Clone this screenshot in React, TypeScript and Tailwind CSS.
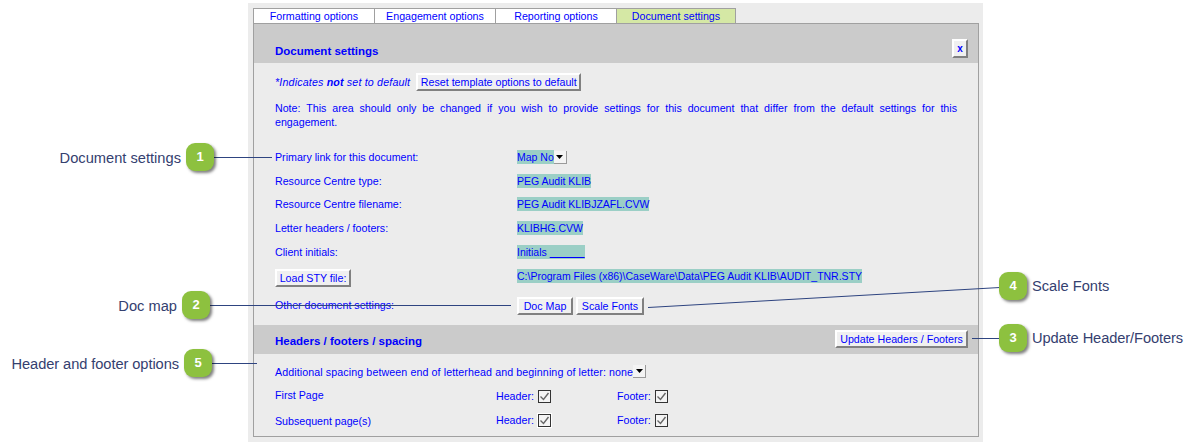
import type { ReactNode } from 'react';

function Btn({ children, className = '' }: { children: ReactNode; className?: string }) {
  return (
    <button className={`flex items-center justify-center h-[18px] bg-[#f0f0f0] border-2 border-t-white border-l-white border-r-[#808080] border-b-[#808080] text-[#0000ff] text-[10.67px] leading-none whitespace-nowrap ${className}`}>
      {children}
    </button>
  );
}

function Val({ children }: { children: ReactNode }) {
  return <span className="inline-block h-[14px] leading-[14px] text-[10.5px] bg-[#9bcfc6] whitespace-pre">{children}</span>;
}

function Arrow() {
  return (
    <span className="flex items-center justify-center w-[13px] h-[13px] bg-[#f4f4f4] border-r border-b border-[#9a9a9a]">
      <svg width="7" height="4" viewBox="0 0 7 4"><path d="M0 0h7L3.5 4z" fill="#000" /></svg>
    </span>
  );
}

function Check({ halo = false }: { halo?: boolean }) {
  return (
    <span className={`flex items-center justify-center w-[13px] h-[13px] bg-[#f4f4f4] border border-[#333] ${halo ? 'outline outline-1 outline-white' : ''}`}>
      <svg width="11" height="11" viewBox="0 0 11 11" fill="none">
        <path d="M1.5 5.5 4.5 8.5 9.5 2" stroke="#666" strokeWidth="1.4" />
      </svg>
    </span>
  );
}

function Row({ label, h, children }: { label: ReactNode; h: string; children?: ReactNode }) {
  return (
    <div className={`flex items-center ${h}`}>
      <div className="w-[242px] shrink-0">{label}</div>
      {children}
    </div>
  );
}

function CheckRow({ label, halo, className, labelClass }: { label: string; halo?: boolean; className: string; labelClass: string }) {
  return (
    <div className={`flex items-center ${className}`}>
      <div className={`w-[221px] shrink-0 ${labelClass}`}>{label}</div>
      <div className="w-[121px] shrink-0 flex items-center gap-[5px]">
        <span className="w-[37px]">Header:</span>
        <Check halo={halo} />
      </div>
      <div className="flex items-center gap-[5px]">
        <span className="w-[33px]">Footer:</span>
        <Check />
      </div>
    </div>
  );
}

function Callout({ n, className }: { n: number; className: string }) {
  return (
    <div className={`absolute w-[28px] h-[28px] rounded-[9px] bg-[#8dc13f] text-white text-[13px] font-bold flex items-center justify-center shadow-[2px_2px_3px_rgba(0,0,0,0.5)] ${className}`}>
      {n}
    </div>
  );
}

function Label({ text, className }: { text: string; className: string }) {
  return <div className={`absolute text-[14.67px] leading-[18px] text-[#34406f] whitespace-nowrap ${className}`}>{text}</div>;
}

export default function App() {
  const tabs = ['Formatting options', 'Engagement options', 'Reporting options'];
  return (
    <div className="relative w-[1199px] h-[445px] bg-white overflow-hidden font-['Liberation_Sans',Arial,sans-serif]">
      <div className="ml-[248px] mt-[3px] w-[735px] h-[439px] bg-[#ececec] px-[5px] pt-[5px] text-[10.67px] text-[#0000ff] absolute top-0">
        {/* tabs */}
        <div className="flex h-[15px]">
          {tabs.map((t) => (
            <div key={t} className="w-[121px] flex items-center justify-center bg-white border-t border-l border-[#a0a0a0]">{t}</div>
          ))}
          <div className="w-[120px] flex items-center justify-center bg-[#d5e8a5] border border-b-0 border-[#a0a0a0]">Document settings</div>
        </div>

        <div className="w-[726px] h-[414px] border border-[#a0a0a0] flex flex-col">
          <div className="h-[39px] shrink-0 bg-[#cbcbcb] flex items-end justify-between pl-[21px] pr-[10px]">
            <span className="font-bold text-[11.5px] leading-none pb-[6px]">Document settings</span>
            <Btn className="w-[16px] !h-[19px] mb-[5px] font-bold !text-[10px]">x</Btn>
          </div>

          <div className="px-[21px] pt-[10px] h-[262px] shrink-0">
            <div className="flex items-center gap-[6px]">
              <span className="italic tracking-[0.17px]">*Indicates <b>not</b> set to default</span>
              <Btn className="w-[165px]">Reset template options to default</Btn>
            </div>
            <p className="mt-[10px] leading-[14px]">
              <span className="block text-justify [text-align-last:justify]">Note: This area should only be changed if you wish to provide settings for this document that differ from the default settings for this</span>
              <span className="block">engagement.</span>
            </p>
            <div className="mt-[16px]">
              <Row label="Primary link for this document:" h="h-[24px]">
                <Val>Map No</Val>
                <Arrow />
              </Row>
              <Row label="Resource Centre type:" h="h-[23px]"><Val>PEG Audit KLIB</Val></Row>
              <Row label="Resource Centre filename:" h="h-[24px]"><Val>PEG Audit KLIBJZAFL.CVW</Val></Row>
              <Row label="Letter headers / footers:" h="h-[24px]"><Val>KLIBHG.CVW</Val></Row>
              <Row label="Client initials:" h="h-[24px]">
                <Val>Initials <span className="underline">{'            '}</span></Val>
              </Row>
              <div className="flex h-[26px] pt-[5px]">
                <div className="w-[242px] shrink-0"><Btn className="w-[76px]">Load STY file:</Btn></div>
                <div className="-mt-[1px]"><Val>C:\Program Files (x86)\CaseWare\Data\PEG Audit KLIB\AUDIT_TNR.STY</Val></div>
              </div>
              <div className="flex h-[35px] pt-[7px]">
                <div className="w-[242px] shrink-0">Other document settings:</div>
                <div className="flex gap-[3px]">
                  <Btn className="w-[56px]">Doc Map</Btn>
                  <Btn className="w-[68px]">Scale Fonts</Btn>
                </div>
              </div>
            </div>
          </div>

          <div className="h-[29px] shrink-0 bg-[#cbcbcb] flex items-center justify-between pl-[21px] pr-[10px]">
            <span className="font-bold text-[11.5px] leading-none pt-[5px]">Headers / footers / spacing</span>
            <Btn className="w-[133px] -mt-[1px]">Update Headers / Footers</Btn>
          </div>

          <div className="px-[21px]">
            <div className="flex items-center h-[34px] pt-[1px] whitespace-pre tracking-[0.1px]">
              Additional spacing between end of letterhead and beginning of letter: none<Arrow />
            </div>
            <CheckRow label="First Page" labelClass="-mt-[3px]" className="h-[24px] -mt-[4px]" />
            <CheckRow label="Subsequent page(s)" labelClass="mt-[2px]" halo className="h-[24px] pt-0" />
          </div>
        </div>
      </div>

      {/* callout leader lines */}
      <svg className="absolute inset-0 pointer-events-none" width="1199" height="445" fill="none" stroke="#2e4480" strokeWidth="1">
        <path d="M214 157.5H272" />
        <path d="M210 305.5H511" />
        <path d="M212 363.5H257" />
        <path d="M648 307.5 1000 287.5" />
        <path d="M972 338.5H1000" />
      </svg>

      <Label text="Document settings" className="right-[1018px] top-[149px]" />
      <Callout n={1} className="left-[186px] top-[143px]" />
      <Label text="Doc map" className="right-[1022px] top-[297px]" />
      <Callout n={2} className="left-[182px] top-[291px]" />
      <Label text="Header and footer options" className="right-[1020px] top-[355px] tracking-[-0.08px]" />
      <Callout n={5} className="left-[184px] top-[349px]" />
      <Callout n={4} className="left-[999px] top-[272px]" />
      <Label text="Scale Fonts" className="left-[1032px] top-[277px]" />
      <Callout n={3} className="left-[999px] top-[324px]" />
      <Label text="Update Header/Footers" className="left-[1032px] top-[329px] tracking-[-0.1px]" />
    </div>
  );
}
